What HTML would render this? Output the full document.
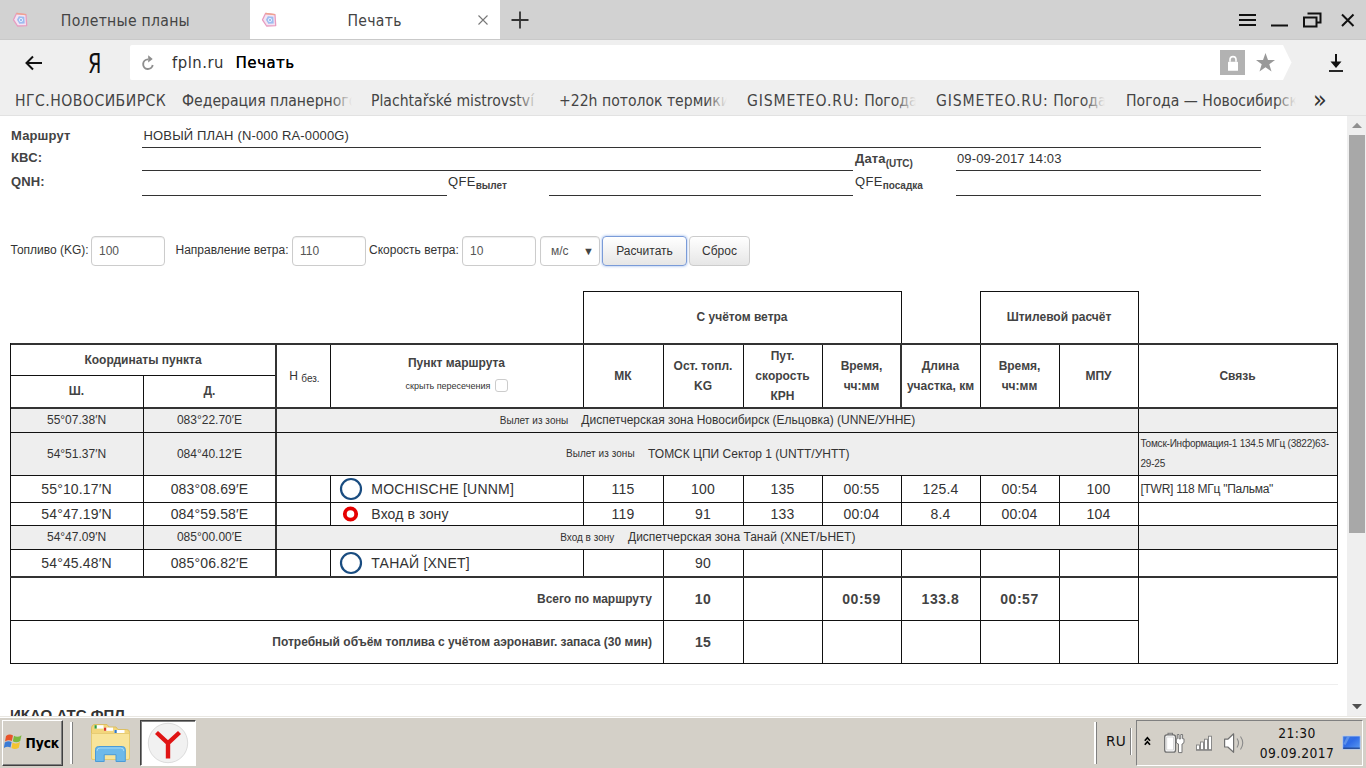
<!DOCTYPE html>
<html><head><meta charset="utf-8"><title>Печать</title>
<style>
*{box-sizing:border-box;margin:0;padding:0}
html,body{width:1366px;height:768px;overflow:hidden;background:#fff;font-family:"Liberation Sans",sans-serif;color:#333}
div,span{position:absolute;white-space:nowrap}
.ui{font-family:"DejaVu Sans Condensed","Liberation Sans",sans-serif}
#tabbar{left:0;top:0;width:1366px;height:39px;background:#d2d2d2}
#tab2{left:250px;top:0;width:250px;height:39px;background:#fff}
.tabt{top:10px;font-size:15.6px;line-height:22px;color:#444;letter-spacing:.28px}
#toolbar{left:0;top:39px;width:1366px;height:46px;background:#efefef;border-top:1px solid #c9c9c9}
#bm{left:0;top:85px;width:1366px;height:30px;background:#efefef}
#bmline{left:0;top:115px;width:1366px;height:1px;background:#e2e2e2}
.bmi{top:90px;font-size:15.6px;line-height:22px;color:#444;overflow:hidden}
.fade{top:0;right:0;width:21px;height:22px;background:linear-gradient(to right,rgba(239,239,239,0),#efefef)}
#page{left:0;top:116px;width:1347px;height:600px;background:#fff;overflow:hidden}
#sb{left:1347px;top:116px;width:19px;height:600px;background:#efefef}
#taskbar{left:0;top:716px;width:1366px;height:52px;background:#d4d0c8}
.hl{background:#333;height:1px}
.b{font-weight:bold;color:#434343}
.t12{font-size:12px;line-height:14px}
.t13{font-size:13px;line-height:15px}
.t13.b{letter-spacing:.15px}
.t14{font-size:14px;line-height:16px;letter-spacing:.15px}
.t10{font-size:10px;line-height:11px}
.t9{font-size:9px;line-height:10px}
.c{text-align:center}
.r{text-align:right}
.inp{height:30px;border:1px solid #ccc;border-radius:4px;background:#fff;font-size:12px;line-height:28px;color:#555;padding-left:7px;box-shadow:inset 0 1px 1px rgba(0,0,0,.075)}
.btn{height:30px;border:1px solid #ccc;border-radius:4px;background:linear-gradient(#fff,#e6e6e6);font-size:12px;line-height:28px;color:#333;text-align:center}
.g{background:#eee}
.L{background:#222}
</style></head><body>

<div id="tabbar"></div><div id="tab2"></div>
<div class="tabt ui" style="left:60.800px">Полетные планы</div>
<div class="tabt ui" style="left:347.500px">Печать</div>
<div id="toolbar"></div>
<svg style="position:absolute;left:130px;top:45px" width="1162" height="35" viewBox="0 0 1162 35"><path d="M2 0H1153L1161.500 17.500L1153 35H2Q0 35 0 33V2Q0 0 2 0Z" fill="#fff"/></svg>
<div id="bm"></div><div id="bmline"></div>
<svg style="position:absolute;left:12px;top:12px" width="17" height="17" viewBox="0 0 17 17"><path d="M1.500 7.800L4.500 1.500L14 2.600L14.700 13.600L5.600 14Z" fill="#f3e4f3" stroke="#e79cc0" stroke-width="1.300" stroke-linejoin="round"/><path d="M4.500 1.500L14 2.600" stroke="#f0a38e" stroke-width="1.300"/><path d="M5 7.800L6.800 4.200L12.300 4.800L12.700 11.600L7.300 11.800Z" fill="#9dbcf0"/><circle cx="9" cy="8" r="1.700" fill="none" stroke="#e8f0ff" stroke-width=".9"/></svg>
<svg style="position:absolute;left:261px;top:12px" width="17" height="17" viewBox="0 0 17 17"><path d="M1.500 7.800L4.500 1.500L14 2.600L14.700 13.600L5.600 14Z" fill="#f3e4f3" stroke="#e79cc0" stroke-width="1.300" stroke-linejoin="round"/><path d="M4.500 1.500L14 2.600" stroke="#f0a38e" stroke-width="1.300"/><path d="M5 7.800L6.800 4.200L12.300 4.800L12.700 11.600L7.300 11.800Z" fill="#9dbcf0"/><circle cx="9" cy="8" r="1.700" fill="none" stroke="#e8f0ff" stroke-width=".9"/></svg>
<svg style="position:absolute;left:477px;top:14px" width="12" height="12" viewBox="0 0 12 12"><path d="M1.5 1.5L10.5 10.5M10.5 1.5L1.5 10.5" stroke="#777" stroke-width="1.1" fill="none"/></svg>
<svg style="position:absolute;left:511px;top:11px" width="18" height="18" viewBox="0 0 18 18"><path d="M9 0.5V17.5M0.5 9H17.5" stroke="#333" stroke-width="1.8" fill="none"/></svg>
<svg style="position:absolute;left:1236px;top:10px" width="124" height="20" viewBox="0 0 124 20"><g stroke="#111" stroke-width="2" fill="none"><path d="M3 5H20M3 10H20M3 15H20"/><path d="M35 15.5H52"/><path d="M71.500 3.500H84.500V12.500H81M68 7.500H80.500V16.500H68Z"/><path d="M106 4.500L117.500 16M117.500 4.500L106 16"/></g></svg>
<svg style="position:absolute;left:24px;top:54px" width="20" height="18" viewBox="0 0 20 18"><path d="M18 9H2.500M9 2.500L2.500 9L9 15.500" stroke="#111" stroke-width="2" fill="none"/></svg>
<div class="ui" style="left:88px;top:48px;font-size:27.4px;line-height:32px;color:#111;transform:scaleX(.78);transform-origin:0 0">Я</div>
<svg style="position:absolute;left:140px;top:54px" width="16" height="18" viewBox="0 0 16 18"><path d="M12.700 11A4.800 4.800 0 1 1 8 5.400" stroke="#8e8e8e" stroke-width="1.9" fill="none"/><path d="M8.200 1.200L12.700 4.900L8.200 8.600Z" fill="#8e8e8e"/></svg>
<div class="ui" style="left:172px;top:51px;font-size:16.5px;line-height:24px;color:#333;letter-spacing:.5px">fpln.ru</div>
<div class="ui" style="left:235.5px;top:51px;font-size:16.5px;line-height:24px;color:#000;letter-spacing:.6px;text-shadow:0.15px 0 0 #000">Печать</div>
<div style="left:1220px;top:50px;width:25px;height:25px;background:#b2b2b2"></div>
<svg style="position:absolute;left:1220px;top:50px" width="25" height="25" viewBox="0 0 25 25"><rect x="8" y="11.800" width="10" height="9" rx=".6" fill="#fff"/><path d="M10 11.800V9.600A3 3 0 0 1 16 9.600V11.800" stroke="#fff" stroke-width="1.600" fill="none"/></svg>
<svg style="position:absolute;left:1255px;top:52px" width="21" height="21" viewBox="0 0 21 21"><path d="M10.500 1L13 8H20L14.300 12.300L16.500 19.500L10.500 15.200L4.500 19.500L6.700 12.300L1 8H8Z" fill="#999"/></svg>
<svg style="position:absolute;left:1328px;top:53px" width="16" height="20" viewBox="0 0 16 20"><path d="M8 1V11" stroke="#111" stroke-width="2" fill="none"/><path d="M2.500 8.500H13.500L8 15Z" fill="#111"/><path d="M1 18H15" stroke="#111" stroke-width="1.800"/></svg>
<div class="bmi ui" style="left:15px;width:156px"><span style="position:static;letter-spacing:.47px">НГС.НОВОСИБИРСК</span></div>
<div class="bmi ui" style="left:182px;width:170px">Федерация планерного спорта<div class="fade"></div></div>
<div class="bmi ui" style="left:371px;width:167px">Plachtařské mistrovství ČR<div class="fade"></div></div>
<div class="bmi ui" style="left:559px;width:168px">+22h потолок термики в<div class="fade"></div></div>
<div class="bmi ui" style="left:747px;width:169px"><span style="position:static;letter-spacing:.9px">GISMETEO.RU:</span> Погода в<div class="fade"></div></div>
<div class="bmi ui" style="left:936px;width:169px"><span style="position:static;letter-spacing:.9px">GISMETEO.RU:</span> Погода в<div class="fade"></div></div>
<div class="bmi ui" style="left:1126px;width:170px">Погода — Новосибирск<div class="fade"></div></div>
<div class="ui" style="left:1313px;top:85.5px;font-size:25px;line-height:28px;color:#333">»</div>
<div id="page">
<div class="t13 b" style="left:11px;top:12px;">Маршрут</div>
<div class="t13 b" style="left:11px;top:34px;">КВС:</div>
<div class="t13 b" style="left:11px;top:58px;">QNH:</div>
<div class="t13" style="left:143.5px;top:12px;letter-spacing:.16px;">НОВЫЙ ПЛАН (N-000 RA-0000G)</div>
<div class="t13" style="left:448px;top:58px;letter-spacing:.3px;">QFE<span class="b" style="position:static;font-size:10px;vertical-align:-3px;letter-spacing:0">вылет</span></div>
<div class="t13 b" style="left:855px;top:35px;">Дата<span style="position:static;font-size:10px;vertical-align:-4px;letter-spacing:0">(UTC)</span></div>
<div class="t13" style="left:855px;top:58px;letter-spacing:.3px;">QFE<span class="b" style="position:static;font-size:10px;vertical-align:-3px;letter-spacing:0">посадка</span></div>
<div class="t13" style="left:957px;top:35px;letter-spacing:.12px;">09-09-2017 14:03</div>
<div style="left:142px;top:31px;width:1119px;height:1px;background:#333"></div>
<div style="left:142px;top:54px;width:711px;height:1px;background:#333"></div>
<div style="left:956px;top:54px;width:305px;height:1px;background:#333"></div>
<div style="left:142px;top:79px;width:305px;height:1px;background:#333"></div>
<div style="left:549px;top:79px;width:304px;height:1px;background:#333"></div>
<div style="left:956px;top:79px;width:305px;height:1px;background:#333"></div>
<div class="t12" style="left:10.5px;top:127px;">Топливо (KG):</div>
<div class="inp" style="left:91px;top:120px;width:74px">100</div>
<div class="t12" style="left:175.5px;top:127px;">Направление ветра:</div>
<div class="inp" style="left:292px;top:120px;width:74px">110</div>
<div class="t12" style="left:369px;top:127px;">Скорость ветра:</div>
<div class="inp" style="left:462px;top:120px;width:74px">10</div>
<div class="inp" style="left:540px;top:120px;width:60px;padding-left:10px">м/с<span style="right:5px;top:0;font-size:11px;color:#444">▼</span></div>
<div class="btn" style="left:602px;top:120px;width:85px;border-color:#7a9bd8;box-shadow:0 0 3px #8fb0e8">Расчитать</div>
<div class="btn" style="left:689px;top:120px;width:61px">Сброс</div>
<div style="left:11px;top:293px;width:1326px;height:23px;background:#eee"></div>
<div style="left:11px;top:317px;width:1326px;height:42px;background:#eee"></div>
<div style="left:11px;top:410px;width:1326px;height:23px;background:#eee"></div>
<div style="left:583px;top:175px;width:319px;height:1px;background:#111"></div>
<div style="left:583px;top:175px;width:1px;height:53px;background:#111"></div>
<div style="left:901px;top:175px;width:1px;height:53px;background:#111"></div>
<div style="left:980px;top:175px;width:159px;height:1px;background:#111"></div>
<div style="left:980px;top:175px;width:1px;height:53px;background:#111"></div>
<div style="left:1138px;top:175px;width:1px;height:53px;background:#111"></div>
<div style="left:10px;top:227px;width:1328px;height:2px;background:#333"></div>
<div style="left:10px;top:291px;width:1328px;height:2px;background:#333"></div>
<div style="left:10px;top:259px;width:266px;height:1px;background:#111"></div>
<div style="left:10px;top:227px;width:1px;height:321px;background:#111"></div>
<div style="left:1337px;top:227px;width:1px;height:321px;background:#111"></div>
<div style="left:143px;top:259px;width:1px;height:201px;background:#111"></div>
<div style="left:275px;top:227px;width:2px;height:235px;background:#333"></div>
<div style="left:330px;top:229px;width:1px;height:62px;background:#111"></div>
<div style="left:583px;top:229px;width:1px;height:62px;background:#111"></div>
<div style="left:663px;top:229px;width:1px;height:62px;background:#111"></div>
<div style="left:743px;top:229px;width:1px;height:62px;background:#111"></div>
<div style="left:822px;top:229px;width:1px;height:62px;background:#111"></div>
<div style="left:901px;top:229px;width:1px;height:62px;background:#111"></div>
<div style="left:980px;top:229px;width:1px;height:62px;background:#111"></div>
<div style="left:1059px;top:229px;width:1px;height:62px;background:#111"></div>
<div style="left:1138px;top:229px;width:1px;height:62px;background:#111"></div>
<div style="left:900px;top:227px;width:2px;height:66px;background:#333"></div>
<div style="left:10px;top:316px;width:1328px;height:1px;background:#111"></div>
<div style="left:10px;top:359px;width:1328px;height:1px;background:#111"></div>
<div style="left:10px;top:386px;width:1328px;height:1px;background:#111"></div>
<div style="left:10px;top:409px;width:1328px;height:1px;background:#111"></div>
<div style="left:10px;top:433px;width:1328px;height:1px;background:#111"></div>
<div style="left:10px;top:460px;width:1328px;height:2px;background:#333"></div>
<div style="left:10px;top:504px;width:1328px;height:1px;background:#111"></div>
<div style="left:10px;top:547px;width:1328px;height:1px;background:#111"></div>
<div style="left:1138px;top:293px;width:1px;height:255px;background:#111"></div>
<div style="left:330px;top:360px;width:1px;height:26px;background:#111"></div>
<div style="left:583px;top:360px;width:1px;height:26px;background:#111"></div>
<div style="left:663px;top:360px;width:1px;height:26px;background:#111"></div>
<div style="left:743px;top:360px;width:1px;height:26px;background:#111"></div>
<div style="left:822px;top:360px;width:1px;height:26px;background:#111"></div>
<div style="left:901px;top:360px;width:1px;height:26px;background:#111"></div>
<div style="left:980px;top:360px;width:1px;height:26px;background:#111"></div>
<div style="left:1059px;top:360px;width:1px;height:26px;background:#111"></div>
<div style="left:330px;top:387px;width:1px;height:22px;background:#111"></div>
<div style="left:583px;top:387px;width:1px;height:22px;background:#111"></div>
<div style="left:663px;top:387px;width:1px;height:22px;background:#111"></div>
<div style="left:743px;top:387px;width:1px;height:22px;background:#111"></div>
<div style="left:822px;top:387px;width:1px;height:22px;background:#111"></div>
<div style="left:901px;top:387px;width:1px;height:22px;background:#111"></div>
<div style="left:980px;top:387px;width:1px;height:22px;background:#111"></div>
<div style="left:1059px;top:387px;width:1px;height:22px;background:#111"></div>
<div style="left:330px;top:434px;width:1px;height:26px;background:#111"></div>
<div style="left:583px;top:434px;width:1px;height:26px;background:#111"></div>
<div style="left:663px;top:434px;width:1px;height:26px;background:#111"></div>
<div style="left:743px;top:434px;width:1px;height:26px;background:#111"></div>
<div style="left:822px;top:434px;width:1px;height:26px;background:#111"></div>
<div style="left:901px;top:434px;width:1px;height:26px;background:#111"></div>
<div style="left:980px;top:434px;width:1px;height:26px;background:#111"></div>
<div style="left:1059px;top:434px;width:1px;height:26px;background:#111"></div>
<div style="left:663px;top:462px;width:1px;height:85px;background:#111"></div>
<div style="left:743px;top:462px;width:1px;height:85px;background:#111"></div>
<div style="left:822px;top:462px;width:1px;height:85px;background:#111"></div>
<div style="left:901px;top:462px;width:1px;height:85px;background:#111"></div>
<div style="left:980px;top:462px;width:1px;height:85px;background:#111"></div>
<div style="left:1059px;top:462px;width:1px;height:85px;background:#111"></div>
<div style="left:1139px;top:504px;width:198px;height:1px;background:#fff"></div>
<div class="t12 b" style="left:10px;top:237px;width:266px;text-align:center;">Координаты пункта</div>
<div class="t12 b" style="left:10px;top:268px;width:133px;text-align:center;">Ш.</div>
<div class="t12 b" style="left:143px;top:268px;width:133px;text-align:center;">Д.</div>
<div class="t12" style="left:279px;top:253px;width:51px;text-align:center;">Н <span style="position:static;font-size:10px;vertical-align:-2px">без.</span></div>
<div class="t12 b" style="left:330px;top:240px;width:253px;text-align:center;">Пункт маршрута</div>
<div class="t9" style="left:405.5px;top:265px;">скрыть пересечения</div>
<div style="left:495px;top:263px;width:13px;height:13px;border:1px solid #ccc;border-radius:3px;background:#fff"></div>
<div class="t12 b" style="left:583px;top:194px;width:318px;text-align:center;">С учётом ветра</div>
<div class="t12 b" style="left:980px;top:194px;width:158px;text-align:center;">Штилевой расчёт</div>
<div class="t12 b" style="left:583px;top:253px;width:80px;text-align:center;">МК</div>
<div class="t12 b" style="left:663px;top:243px;width:80px;text-align:center;">Ост. топл.</div>
<div class="t12 b" style="left:663px;top:263px;width:80px;text-align:center;">KG</div>
<div class="t12 b" style="left:743px;top:233px;width:79px;text-align:center;">Пут.</div>
<div class="t12 b" style="left:743px;top:253px;width:79px;text-align:center;">скорость</div>
<div class="t12 b" style="left:743px;top:273px;width:79px;text-align:center;">КРН</div>
<div class="t12 b" style="left:822px;top:243px;width:79px;text-align:center;">Время,</div>
<div class="t12 b" style="left:822px;top:263px;width:79px;text-align:center;">чч:мм</div>
<div class="t12 b" style="left:901px;top:243px;width:79px;text-align:center;">Длина</div>
<div class="t12 b" style="left:901px;top:263px;width:79px;text-align:center;">участка, км</div>
<div class="t12 b" style="left:980px;top:243px;width:79px;text-align:center;">Время,</div>
<div class="t12 b" style="left:980px;top:263px;width:79px;text-align:center;">чч:мм</div>
<div class="t12 b" style="left:1059px;top:253px;width:79px;text-align:center;">МПУ</div>
<div class="t12 b" style="left:1138px;top:253px;width:199px;text-align:center;">Связь</div>
<div class="t12" style="left:10px;top:297px;width:133px;text-align:center;">55°07.38′N</div>
<div class="t12" style="left:143px;top:297px;width:133px;text-align:center;">083°22.70′E</div>
<div class="t12" style="left:10px;top:331px;width:133px;text-align:center;">54°51.37′N</div>
<div class="t12" style="left:143px;top:331px;width:133px;text-align:center;">084°40.12′E</div>
<div class="t14" style="left:10px;top:365px;width:133px;text-align:center;">55°10.17′N</div>
<div class="t14" style="left:143px;top:365px;width:133px;text-align:center;">083°08.69′E</div>
<div class="t14" style="left:10px;top:390px;width:133px;text-align:center;">54°47.19′N</div>
<div class="t14" style="left:143px;top:390px;width:133px;text-align:center;">084°59.58′E</div>
<div class="t12" style="left:10px;top:414px;width:133px;text-align:center;">54°47.09′N</div>
<div class="t12" style="left:143px;top:414px;width:133px;text-align:center;">085°00.00′E</div>
<div class="t14" style="left:10px;top:439px;width:133px;text-align:center;">54°45.48′N</div>
<div class="t14" style="left:143px;top:439px;width:133px;text-align:center;">085°06.82′E</div>
<div class="t10" style="left:499.7px;top:299px;letter-spacing:.05px;">Вылет из зоны</div>
<div class="t12" style="left:581.3px;top:297px;">Диспетчерская зона Новосибирск (Ельцовка) (UNNE/УННЕ)</div>
<div class="t10" style="left:566px;top:332px;letter-spacing:.05px;">Вылет из зоны</div>
<div class="t12" style="left:648px;top:331px;">ТОМСК ЦПИ Сектор 1 (UNTT/УНТТ)</div>
<div class="t10" style="left:560.2px;top:416px;">Вход в зону</div>
<div class="t12" style="left:628px;top:414px;">Диспетчерская зона Танай (XNET/ЬНЕТ)</div>
<div class="t10" style="left:1140.5px;top:322px;letter-spacing:-.22px;">Томск-Информация-1 134.5 МГц (3822)63-</div>
<div class="t10" style="left:1140.5px;top:342px;letter-spacing:-.22px;">29-25</div>
<div class="t12" style="left:1140.5px;top:366px;letter-spacing:-.27px;">[TWR] 118 МГц "Пальма"</div>
<svg style="position:absolute;left:339px;top:361px" width="24" height="24" viewBox="0 0 24 24"><circle cx="12" cy="12" r="10" fill="#fff" stroke="#194c80" stroke-width="2.200"/></svg>
<svg style="position:absolute;left:339px;top:434.5px" width="24" height="24" viewBox="0 0 24 24"><circle cx="12" cy="12" r="10" fill="#fff" stroke="#194c80" stroke-width="2.200"/></svg>
<svg style="position:absolute;left:341px;top:388.4px" width="20" height="20" viewBox="0 0 20 20"><circle cx="9.500" cy="10" r="5.700" fill="#fff" stroke="#e60000" stroke-width="3.800"/></svg>
<div class="t14" style="left:371.3px;top:365px;letter-spacing:.22px;">MOCHISCHE [UNNM]</div>
<div class="t14" style="left:371.3px;top:390px;">Вход в зону</div>
<div class="t14" style="left:371.3px;top:439px;letter-spacing:.22px;">ТАНАЙ [XNET]</div>
<div class="t14" style="left:583px;top:365px;width:80px;text-align:center;">115</div>
<div class="t14" style="left:663px;top:365px;width:80px;text-align:center;">100</div>
<div class="t14" style="left:743px;top:365px;width:79px;text-align:center;">135</div>
<div class="t14" style="left:822px;top:365px;width:79px;text-align:center;">00:55</div>
<div class="t14" style="left:901px;top:365px;width:79px;text-align:center;">125.4</div>
<div class="t14" style="left:980px;top:365px;width:79px;text-align:center;">00:54</div>
<div class="t14" style="left:1059px;top:365px;width:79px;text-align:center;">100</div>
<div class="t14" style="left:583px;top:390px;width:80px;text-align:center;">119</div>
<div class="t14" style="left:663px;top:390px;width:80px;text-align:center;">91</div>
<div class="t14" style="left:743px;top:390px;width:79px;text-align:center;">133</div>
<div class="t14" style="left:822px;top:390px;width:79px;text-align:center;">00:04</div>
<div class="t14" style="left:901px;top:390px;width:79px;text-align:center;">8.4</div>
<div class="t14" style="left:980px;top:390px;width:79px;text-align:center;">00:04</div>
<div class="t14" style="left:1059px;top:390px;width:79px;text-align:center;">104</div>
<div class="t14" style="left:663px;top:439px;width:80px;text-align:center;">90</div>
<div class="t12 b" style="left:330px;top:476px;width:322px;text-align:right;">Всего по маршруту</div>
<div class="t12 b" style="left:200px;top:519px;width:452px;text-align:right;">Потребный объём топлива с учётом аэронавиг. запаса (30 мин)</div>
<div class="t14 b" style="left:663px;top:475px;width:80px;text-align:center;letter-spacing:.55px;">10</div>
<div class="t14 b" style="left:822px;top:475px;width:79px;text-align:center;letter-spacing:.55px;">00:59</div>
<div class="t14 b" style="left:901px;top:475px;width:79px;text-align:center;letter-spacing:.55px;">133.8</div>
<div class="t14 b" style="left:980px;top:475px;width:79px;text-align:center;letter-spacing:.55px;">00:57</div>
<div class="t14 b" style="left:663px;top:518px;width:80px;text-align:center;">15</div>
<div style="left:10px;top:568px;width:1328px;height:1px;background:#eee"></div>
<div class="b" style="left:10px;top:590px;font-size:15px;line-height:17px;color:#333">ИКАО АТС ФПЛ</div>
</div>
<div id="sb"></div>
<div style="left:1349px;top:135px;width:16px;height:398px;background:#a8a8a8"></div>
<svg style="position:absolute;left:1351px;top:121px" width="12" height="8" viewBox="0 0 12 8"><path d="M1 7L6 1.800L11 7Z" fill="#909090"/></svg>
<svg style="position:absolute;left:1351px;top:703px" width="12" height="8" viewBox="0 0 12 8"><path d="M1 1L6 6.200L11 1Z" fill="#505050"/></svg>
<div id="taskbar"></div>
<div style="left:0;top:716px;width:1366px;height:1px;background:#e9e7e2"></div>
<div style="left:0;top:717px;width:1366px;height:1px;background:#fff"></div>
<div style="left:2px;top:720px;width:61px;height:46px;background:#d4d0c8;border:1px solid;border-color:#fff #404040 #404040 #fff;box-shadow:inset -1px -1px 0 #808080"></div>
<svg style="position:absolute;left:4px;top:732px" width="20" height="20" viewBox="0 0 20 20"><path d="M2 4Q5.500 1.500 9 3.500L7.800 9Q4.500 7.200 1 9.500Z" fill="#e8532a"/><path d="M10 3.800Q13.500 6 17.500 3.200L16.200 9Q12.500 11.500 8.800 9.300Z" fill="#7cb83e"/><path d="M0.800 10.500Q4.200 8.200 7.600 10L6.500 15.500Q3.300 13.800 -0.200 16Z" fill="#3a7bd5"/><path d="M8.600 10.400Q12.300 12.600 16 10L14.800 15.800Q11 18.200 7.500 16Z" fill="#f4c430"/></svg>
<div class="ui b" style="left:25.5px;top:733px;font-size:13.7px;line-height:20px;color:#000;letter-spacing:-.1px">Пуск</div>
<div style="left:70px;top:722px;width:2px;height:42px;background:#fff"></div><div style="left:72px;top:722px;width:1px;height:42px;background:#808080"></div>
<svg style="position:absolute;left:90px;top:722px" width="42" height="42" viewBox="0 0 42 42"><path d="M1.500 7Q1.500 2.500 5 2.500H17L19 5H26L28 7.500H36.500Q39.500 7.500 39.500 10.500V36Q39.500 37.500 38 37.500H3Q1.500 37.500 1.500 36Z" fill="#f3d67c" stroke="#dcbf62" stroke-width="1"/><rect x="4.500" y="3.200" width="9" height="3.400" fill="#fff"/><rect x="4.500" y="3.200" width="2.200" height="3.400" fill="#2f9b3a"/><rect x="14" y="5.600" width="9" height="3.200" fill="#fff"/><rect x="14" y="5.600" width="2.200" height="3.200" fill="#d9342b"/><rect x="24.500" y="8" width="10" height="3" fill="#fff"/><rect x="24.500" y="8" width="2.200" height="3" fill="#2f78c8"/><path d="M1.500 11.500H39.500V36Q39.500 37.500 38 37.500H3Q1.500 37.500 1.500 36Z" fill="#f8e49a" stroke="#e3c86e" stroke-width=".8"/><path d="M5.500 39.500V27.500Q5.500 24.500 8.500 24.500H32.300Q35.300 24.500 35.300 27.500V39.500H26V32.700H14.200V39.500Z" fill="#6db9ea" stroke="#4a9bd8" stroke-width="1"/><path d="M7 29Q7 26 10 26H30.800Q33.800 26 33.800 29" fill="none" stroke="#a6dbf7" stroke-width="1"/></svg>
<div style="left:140px;top:720px;width:56px;height:46px;background:#fff;border:1px solid;border-color:#404040 #fff #fff #404040;box-shadow:inset 1px 1px 0 #808080"></div>
<svg style="position:absolute;left:147px;top:722px" width="42" height="42" viewBox="0 0 42 42"><circle cx="21" cy="21" r="19.700" fill="#f1f1f1" stroke="#dcdcdc" stroke-width="1"/><path d="M9.500 10.500L21 21.200V36.500M32.500 10.500L21 21.200" stroke="#e01414" stroke-width="4.400" fill="none" stroke-linejoin="miter"/></svg>
<div style="left:1094px;top:722px;width:2px;height:42px;background:#fff"></div><div style="left:1096px;top:722px;width:1px;height:42px;background:#808080"></div>
<div style="left:1106px;top:731px;font-family:'DejaVu Sans',sans-serif;font-size:13.7px;line-height:20px;color:#111;letter-spacing:.2px">RU</div>
<div style="left:1130px;top:728px;width:1px;height:27px;background:#808080"></div><div style="left:1131px;top:728px;width:1px;height:27px;background:#fff"></div>
<div style="left:1136px;top:720px;width:227px;height:46px;border:1px solid;border-color:#808080 #fff #fff #808080"></div>
<svg style="position:absolute;left:1140px;top:728px" width="110" height="28" viewBox="0 0 110 28"><path d="M4.800 12.700L7.400 9.700L10 12.700M4.800 16.800L7.400 13.800L10 16.800" stroke="#000" stroke-width="1.700" fill="none"/><rect x="28" y="5.300" width="4.500" height="3" fill="#fff" stroke="#777" stroke-width="1"/><rect x="24.700" y="6.900" width="10.800" height="17.300" rx="2.200" fill="#fff" stroke="#6f6f6f" stroke-width="1.300"/><rect x="26.800" y="9" width="6.600" height="13" fill="#fff" stroke="#bbb" stroke-width=".6"/><path d="M37.300 6.500H39V10.800H40.800V6.500H42.600V10.800H44V14Q44 15.800 42 16V24.600H38.500V16Q36.300 15.800 36.300 14V10.800H37.300Z" fill="#fff" stroke="#777" stroke-width="1"/><g fill="#fff" stroke="#808080" stroke-width=".9"><rect x="56.500" y="17" width="3" height="4.700"/><rect x="60.500" y="14" width="3" height="7.700"/><rect x="64.500" y="11.200" width="3" height="10.500"/><rect x="68.500" y="8.200" width="3" height="13.500"/></g><path d="M56 22.200H72" stroke="#808080" stroke-width="1"/><path d="M84.600 11.200H87.800L93.600 5.800V24.300L87.800 19H84.600Z" fill="#fff" stroke="#707070" stroke-width="1.200" stroke-linejoin="round"/><path d="M97 10.500Q100 15 97 19.500M100.500 8.500Q105 15 100.500 21.500" stroke="#8a8a8a" stroke-width="1.100" fill="none"/></svg>
<div class="ui" style="left:1262px;top:723px;width:70px;text-align:center;font-size:13.7px;line-height:20px;color:#111;letter-spacing:.4px">21:30</div>
<div class="ui" style="left:1257px;top:743px;width:80px;text-align:center;font-size:13.7px;line-height:20px;color:#111;letter-spacing:.4px">09.09.2017</div>
<svg style="position:absolute;left:1342px;top:735px" width="20" height="16" viewBox="0 0 20 16"><defs><linearGradient id="bg" x1="0" y1="0" x2="1" y2="1"><stop offset="0" stop-color="#3a74dc"/><stop offset=".45" stop-color="#2f6be6"/><stop offset="1" stop-color="#5c9cf2"/></linearGradient></defs><rect x=".8" y="1" width="17.400" height="13.200" fill="url(#bg)" stroke="#b9cdee" stroke-width=".8"/><path d="M1.200 13.200H17.800" stroke="#1d3f86" stroke-width="1.200"/><path d="M1.500 9L5 1.500H8L3.500 10Z" fill="#7aa6ee" opacity=".6"/></svg>
</body></html>
